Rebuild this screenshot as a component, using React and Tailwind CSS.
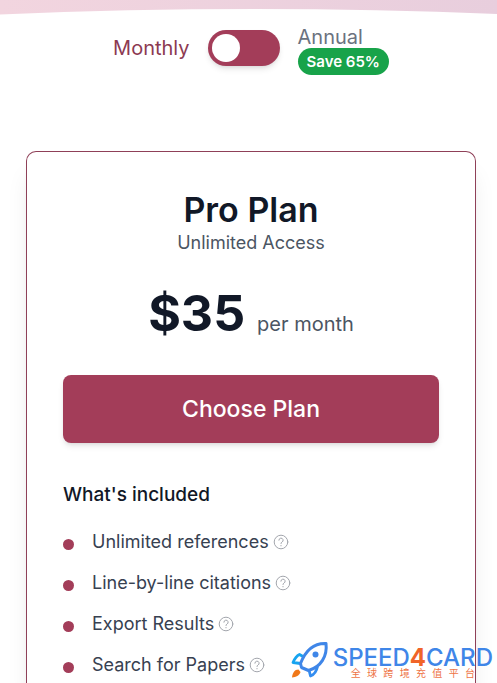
import { useState } from 'react'

const FEATURES = ['Unlimited references', 'Line-by-line citations', 'Export Results', 'Search for Papers']

function HelpIcon() {
  return (
    <svg viewBox="0 0 16 16" className="h-4 w-4" fill="none" stroke="#a3a6ad" strokeLinecap="round" strokeLinejoin="round" aria-hidden="true">
      <circle cx="8" cy="8" r="6.8" />
      <path d="M5.9 6.2a2.1 2.1 0 1 1 3.1 1.9c-.7.4-1 .7-1 1.4" />
      <path d="M8 11.6v.1" strokeWidth="1.2" />
    </svg>
  )
}

function BillingToggle({ annual, onChange }) {
  return (
    <div className="flex items-start justify-center gap-[18px]">
      <span id="billing-monthly" className="mt-1 text-[20px] leading-9 text-[#8c3a52]">
        Monthly
      </span>
      <button
        type="button"
        role="switch"
        aria-checked={annual}
        aria-labelledby="billing-annual"
        onClick={() => onChange(!annual)}
        className={`mt-1 flex h-9 w-[72px] items-center rounded-full bg-[#a33d59] px-1 shadow-md ${annual ? 'justify-end' : 'justify-start'}`}
      >
        <span className="h-7 w-7 rounded-full bg-white" />
      </button>
      <div className="flex flex-col items-start">
        <span id="billing-annual" className="text-[20px] leading-[22px] text-[#6b7280]">
          Annual
        </span>
        <span className="rounded-full bg-[#18a34a] px-[9px] text-[15px] leading-[27px] font-semibold text-white">Save 65%</span>
      </div>
    </div>
  )
}

function PlanCard() {
  return (
    <section className="flex-1 rounded-t-[10px] border border-b-0 border-[#8f4058] bg-white px-9 pt-9 shadow-xl">
      <div className="text-center">
        <h2 className="text-[34px] leading-[43px] font-semibold text-[#111827]">Pro Plan</h2>
        <p className="text-[18px] leading-6 text-[#4b5563]">Unlimited Access</p>
        <p className="mt-7 flex items-baseline justify-center gap-3 text-[#111827]">
          <span className="text-[50px] leading-[60px] font-bold">$35</span>
          <span className="text-[20px] leading-7 text-[#4b5563]">per month</span>
        </p>
      </div>
      <button type="button" className="mt-8 h-[68px] w-full rounded-lg bg-[#a33d59] text-[23px] font-medium text-white shadow-md">
        Choose Plan
      </button>
      <h3 className="mt-[38px] text-[19px] leading-7 font-medium text-[#111827]">What's included</h3>
      <ul className="mt-[19px] space-y-[13px]">
        {FEATURES.map((feature) => (
          <li key={feature} className="flex items-center">
            <span className="mt-1 mr-[18px] h-[11px] w-[11px] rounded-full bg-[#a33d59]" />
            <span className="mr-1 text-[18px] leading-7 text-[#374151]">{feature}</span>
            <HelpIcon />
          </li>
        ))}
      </ul>
    </section>
  )
}

function Watermark() {
  return (
    <div className="absolute right-1 bottom-1 flex items-end gap-1">
      <svg viewBox="0 0 38 38" className="h-[38px] w-[38px]" fill="none" strokeLinejoin="round" aria-hidden="true">
        <path d="M12 15.5 8.5 13.5C5.5 15 3.5 18 2 21.5l7.5 1" stroke="#16a4f0" strokeWidth="2.8" />
        <path d="m18 29 1.5 6c4-1.5 6-4.5 7-9.5" stroke="#338df0" strokeWidth="2.8" />
        <path d="M35 2.5C24 2 15.5 7 9.5 22.5l1 4 7 3C30 26 36.5 15 35 2.5Z" stroke="#3f86e8" strokeWidth="3" />
        <circle cx="24.5" cy="13.5" r="3" fill="#3f86e8" />
        <path d="M7.5 28.500c-4 0-6 3.500-6.500 8 4-.5 7.500-2 8.500-5.500Z" fill="#f07818" />
      </svg>
      <div className="flex flex-col">
        <span className="text-[24px] leading-[18px] font-medium text-[#3f86e8]">
          SPEED<span className="font-bold text-[#f06428]">4</span>CARD
        </span>
        <span className="mr-[18px] ml-[18px] text-justify font-['Noto_Sans_CJK_SC',sans-serif] text-[10px] leading-3 text-[#ee7446] [text-align-last:justify]">
          全球跨境充值平台
        </span>
      </div>
    </div>
  )
}

export default function App() {
  const [annual, setAnnual] = useState(false)

  return (
    <main className="relative flex min-h-screen flex-col overflow-hidden bg-white font-[Inter,sans-serif]">
      <svg viewBox="0 0 497 15" preserveAspectRatio="none" className="h-[15px] w-full" aria-hidden="true">
        <defs>
          <linearGradient id="hero-fade">
            <stop offset="0" stopColor="#f2d5df" />
            <stop offset="1" stopColor="#e8cedd" />
          </linearGradient>
        </defs>
        <path d="M0 0H497V14Q250 4 0 14.500Z" fill="url(#hero-fade)" />
      </svg>
      <div className="mt-[11px] flex flex-1 flex-col pr-[21px] pl-[26px]">
        <BillingToggle annual={annual} onChange={setAnnual} />
        <div className="mt-[76px] flex flex-1 flex-col">
          <PlanCard />
        </div>
      </div>
      <Watermark />
    </main>
  )
}
